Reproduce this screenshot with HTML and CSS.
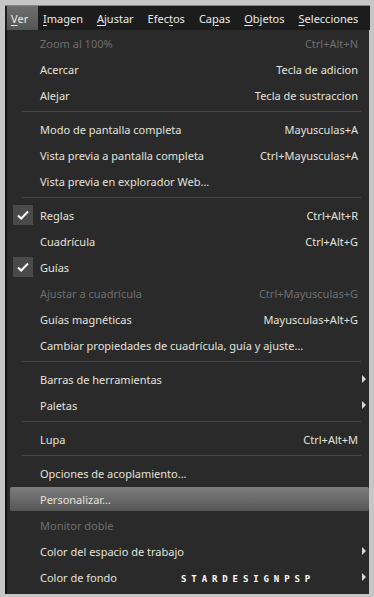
FILE: index.html
```html
<!DOCTYPE html>
<html lang="es">
<head>
  <meta charset="UTF-8" />
  <title>Menu Ver</title>
  <link rel="stylesheet" href="styles.css">
</head>
<body>
  <div class="window">
    <nav class="menubar">
      <span class="top active"><u>V</u>er</span>
      <span class="top"><u>I</u>magen</span>
      <span class="top"><u>A</u>justar</span>
      <span class="top">Efec<u>t</u>os</span>
      <span class="top">Ca<u>p</u>as</span>
      <span class="top"><u>O</u>bjetos</span>
      <span class="top"><u>S</u>elecciones</span>
    </nav>

    <div class="dropdown">
      <div class="item disabled"><span class="label">Zoom al 100%</span><span class="key">Ctrl+Alt+N</span></div>
      <div class="item"><span class="label">Acercar</span><span class="key">Tecla de adicion</span></div>
      <div class="item"><span class="label">Alejar</span><span class="key">Tecla de sustraccion</span></div>
      <div class="sep"></div>
      <div class="item"><span class="label">Modo de pantalla completa</span><span class="key">Mayusculas+A</span></div>
      <div class="item"><span class="label">Vista previa a pantalla completa</span><span class="key">Ctrl+Mayusculas+A</span></div>
      <div class="item"><span class="label">Vista previa en explorador Web...</span></div>
      <div class="sep"></div>
      <div class="item"><span class="check">
        <svg width="12" height="10" viewBox="0 0 12 10"><path d="M1 5.5 L4.2 8.5 L11 1.5" fill="none" stroke="#fff" stroke-width="2"/></svg>
      </span><span class="label">Reglas</span><span class="key">Ctrl+Alt+R</span></div>
      <div class="item"><span class="label">Cuadrícula</span><span class="key">Ctrl+Alt+G</span></div>
      <div class="item"><span class="check">
        <svg width="12" height="10" viewBox="0 0 12 10"><path d="M1 5.5 L4.2 8.5 L11 1.5" fill="none" stroke="#fff" stroke-width="2"/></svg>
      </span><span class="label">Guías</span></div>
      <div class="item disabled"><span class="label">Ajustar a cuadrícula</span><span class="key">Ctrl+Mayusculas+G</span></div>
      <div class="item"><span class="label">Guías magnéticas</span><span class="key">Mayusculas+Alt+G</span></div>
      <div class="item"><span class="label">Cambiar propiedades de cuadrícula, guía y ajuste...</span></div>
      <div class="sep"></div>
      <div class="item sub"><span class="label">Barras de herramientas</span></div>
      <div class="item sub"><span class="label">Paletas</span></div>
      <div class="sep"></div>
      <div class="item"><span class="label">Lupa</span><span class="key">Ctrl+Alt+M</span></div>
      <div class="sep"></div>
      <div class="item"><span class="label">Opciones de acoplamiento...</span></div>
      <div class="item hover"><span class="label">Personalizar...</span></div>
      <div class="item disabled"><span class="label">Monitor doble</span></div>
      <div class="item sub"><span class="label">Color del espacio de trabajo</span></div>
      <div class="item sub"><span class="label">Color de fondo</span></div>
      <div class="watermark">STARDESIGNPSP</div>
    </div>
  </div>
</body>
</html>
```

FILE: styles.css
```css
* {
  margin: 0;
  padding: 0;
  box-sizing: border-box;
}

body {
  background: #c6c6c6;
  font-family: 'Noto Sans', 'Open Sans', sans-serif;
  font-size: 11px;
  color: #e4e2dc;
}

.window {
  margin: 5px 0 0 5px;
  width: 365px;
}

.menubar {
  height: 25px;
  background: #1c1c1c;
  border-top: 1px solid #e06a1c;
  display: flex;
  align-items: stretch;
  gap: 14px;
  padding-left: 2px;
  white-space: nowrap;
}

.top {
  display: flex;
  align-items: center;
  color: #ebebeb;
}

.top u {
  text-decoration-thickness: 1px;
  text-underline-offset: 2px;
}

.top.active {
  background: linear-gradient(#6e6e6e, #555);
  width: 31px;
  padding-left: 4px;
  margin-right: -9px;
}

/* Dropdown */
.dropdown {
  position: relative;
  width: 364px;
  background: #2a2a2a;
  border-left: 2px solid #141414;
  padding: 0 0 4px 0;
}

.item {
  height: 26px;
  display: flex;
  align-items: center;
  padding: 0 11px 0 33px;
  position: relative;
}

.item .label {
  flex: 1;
}

.item .key {
  text-align: right;
}

.item.disabled {
  color: #6e6e6e;
}

.item.hover {
  background: linear-gradient(#7c7c7c, #575757);
  border-radius: 2px;
  margin: 1px 0 1px 3px;
  padding-left: 30px;
  height: 24px;
}

.check {
  position: absolute;
  left: 6px;
  top: 3px;
  width: 20px;
  height: 20px;
  background: #4a4a4a;
  display: flex;
  align-items: center;
  justify-content: center;
}

.item.sub::after {
  content: "";
  position: absolute;
  right: 3px;
  top: 9px;
  border-left: 4px solid #d8d8d8;
  border-top: 4px solid transparent;
  border-bottom: 4px solid transparent;
}

.sep {
  height: 1px;
  background: #454545;
  margin: 3px 8px 4px 15px;
}

.watermark {
  position: absolute;
  left: 174px;
  bottom: 10px;
  font-family: 'DejaVu Sans Mono', monospace;
  font-size: 9px;
  font-weight: bold;
  letter-spacing: 4.9px;
  color: #fff;
}
```
